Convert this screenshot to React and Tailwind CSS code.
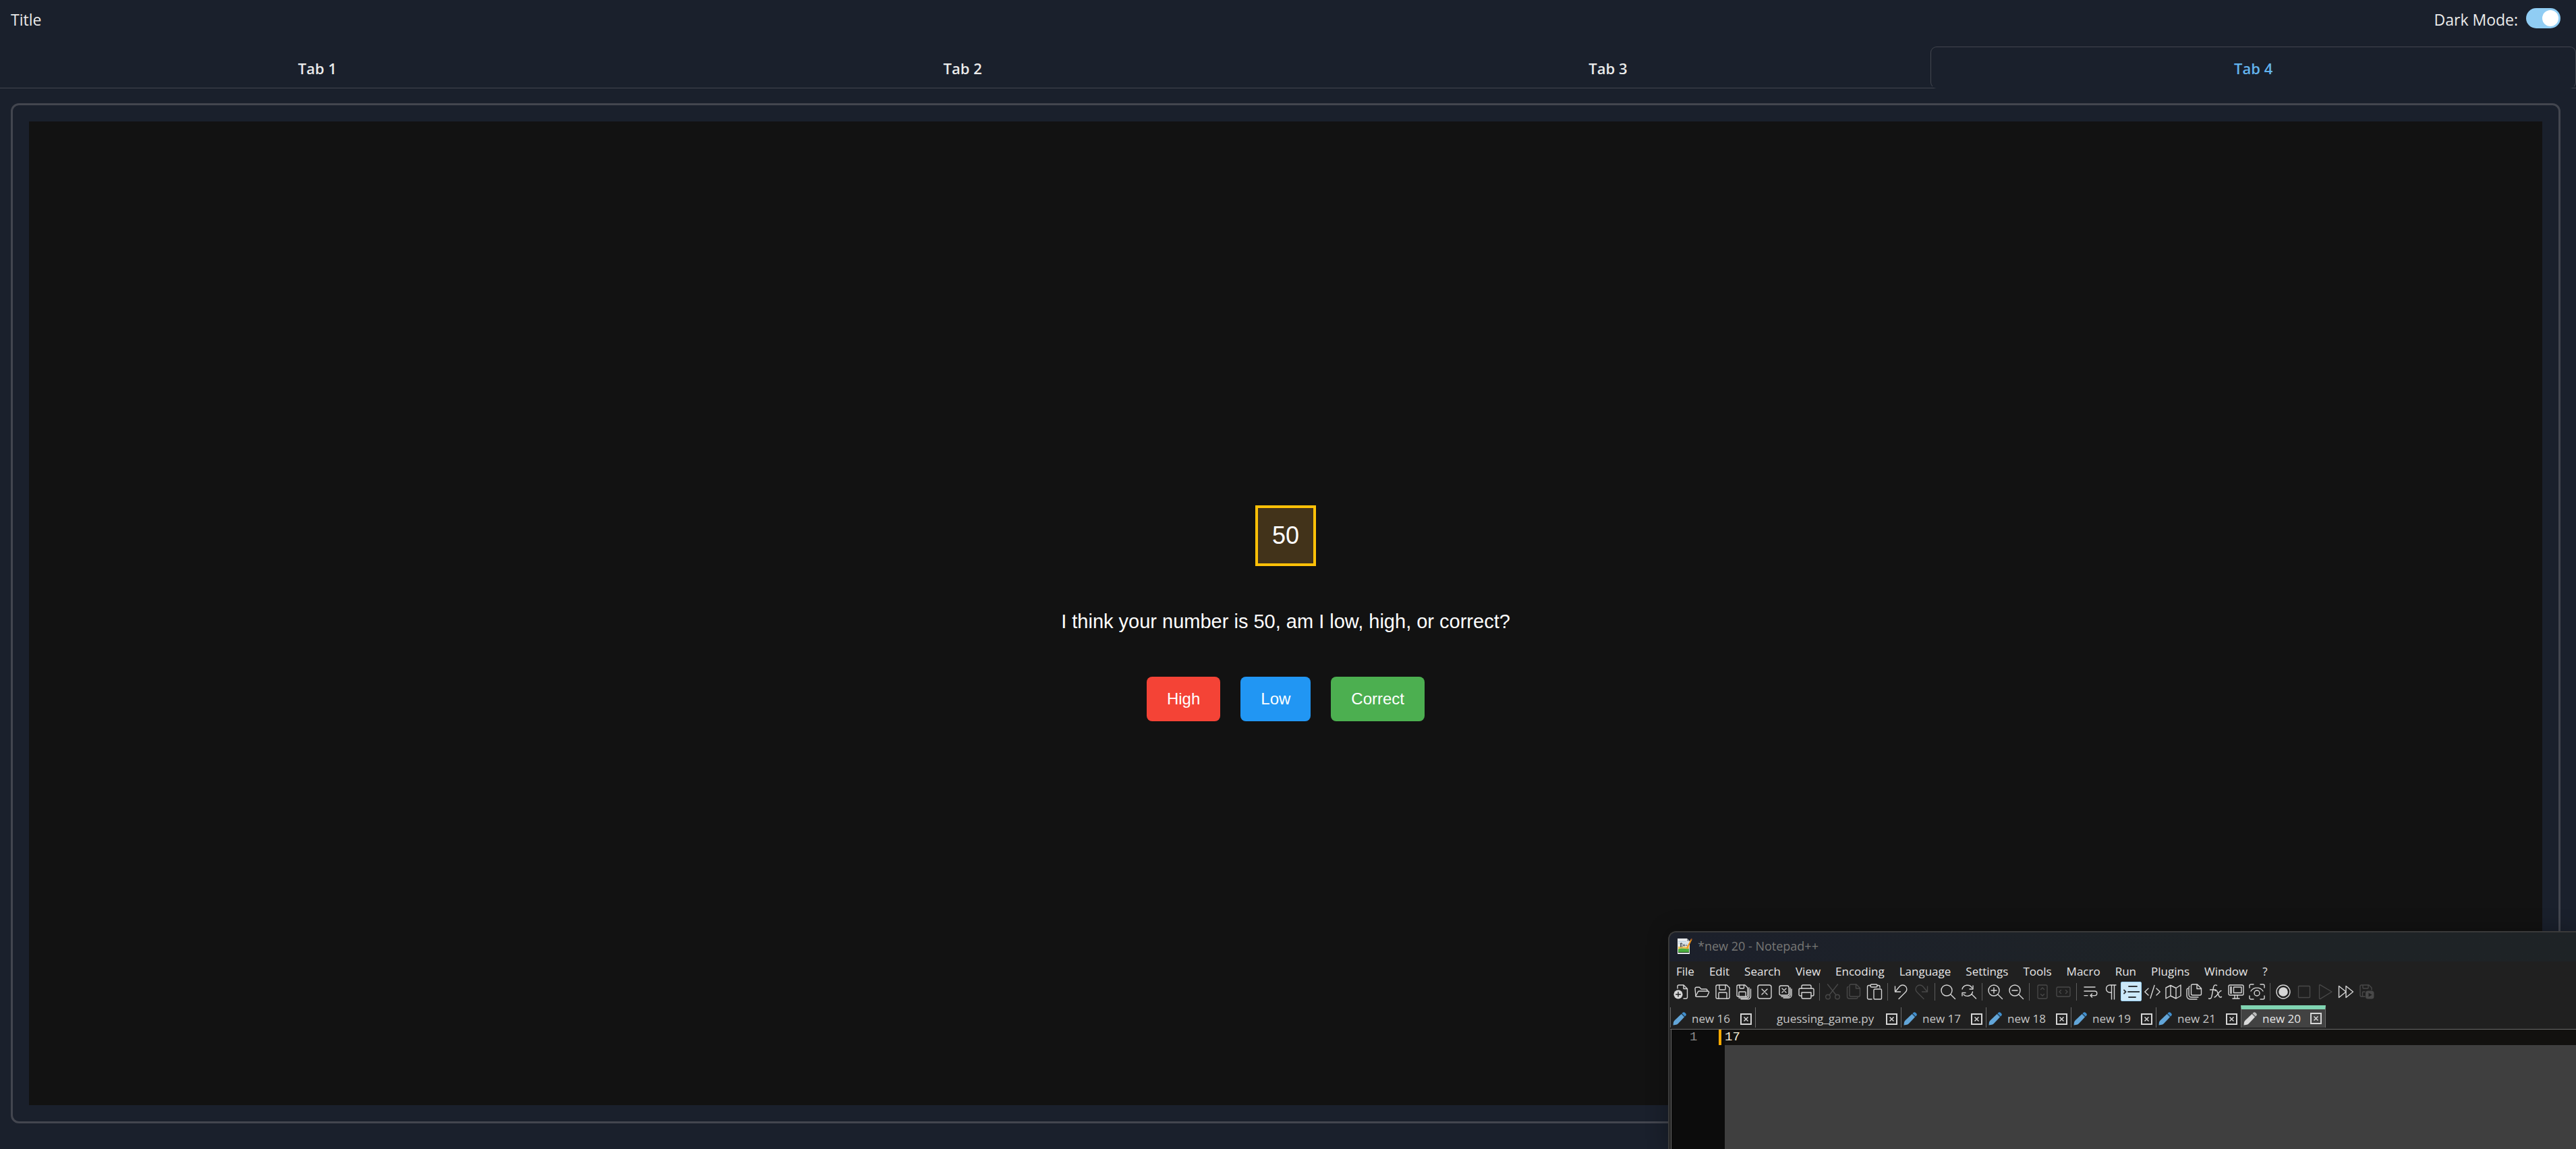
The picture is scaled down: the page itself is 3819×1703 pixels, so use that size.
import React, { useState } from "react";

const stroke = {
  fill: "none",
  stroke: "currentColor",
  strokeWidth: 1.4,
  strokeLinecap: "round",
  strokeLinejoin: "round",
};

function Icon({ children }) {
  return (
    <svg viewBox="0 0 24 24" className="size-6" aria-hidden="true" {...stroke}>
      {children}
    </svg>
  );
}

const icons = {
  New: (
    <>
      <path d="M7 7V4a2 2 0 0 1 2-2h7l5.5 5.5V20a2 2 0 0 1-2 2H16M16 2v5.5h5.5" />
      <circle cx="8" cy="15.8" r="6.6" fill="currentColor" stroke="none" />
      <path d="M8 12.5v6.6M4.7 15.8h6.6" stroke="#202020" />
    </>
  ),
  Open: (
    <>
      <path d="M3 18.5 2 7.5a2 2 0 0 1 2-2.2h4.5L11 8h7a2 2 0 0 1 2 2v1" />
      <path d="M3 18.5 6.3 12a2 2 0 0 1 1.8-1H21a1.5 1.5 0 0 1 1.5 2l-2.3 5a2 2 0 0 1-2 1.3H4.2A1.5 1.5 0 0 1 3 18.5Z" />
    </>
  ),
  Save: (
    <>
      <path d="M4 2h14l4 4v14a2 2 0 0 1-2 2H4a2 2 0 0 1-2-2V4a2 2 0 0 1 2-2Z" />
      <path d="M7 2v6a1 1 0 0 0 1 1h7a1 1 0 0 0 1-1V2M6 22v-8a1 1 0 0 1 1-1h10a1 1 0 0 1 1 1v8" />
    </>
  ),
  "Save All": (
    <>
      <path d="M4 2h10l4 4v11a2 2 0 0 1-2 2H4a2 2 0 0 1-2-2V4a2 2 0 0 1 2-2Z" />
      <path d="M6 2v4a1 1 0 0 0 1 1h4.500a1 1 0 0 0 1-1V2M5 19v-6a1 1 0 0 1 1-1h8a1 1 0 0 1 1 1v6M20 6v12a3 3 0 0 1-3 3H5M22.500 8v11a4 4 0 0 1-4 3.800H8" />
    </>
  ),
  Close: (
    <>
      <rect x="2" y="2" width="20" height="20" rx="3" />
      <path d="m8 8 8 8M16 8l-8 8" />
    </>
  ),
  "Close All": (
    <>
      <rect x="3" y="3" width="14" height="14" rx="2.500" />
      <path d="m7 7 6 6M13 7l-6 6M19 6v10a3 3 0 0 1-3 3H6M21 8v9a4 4 0 0 1-4 4H9" />
    </>
  ),
  Print: (
    <>
      <path d="M5 18H3a2 2 0 0 1-2-2V9a2 2 0 0 1 2-2h18a2 2 0 0 1 2 2v7a2 2 0 0 1-2 2h-2" />
      <path d="M5 7V4a2 2 0 0 1 2-2h10a2 2 0 0 1 2 2v3M5 13h14v7a2 2 0 0 1-2 2H7a2 2 0 0 1-2-2Z" />
    </>
  ),
  Cut: (
    <>
      <circle cx="5" cy="19.500" r="3.300" />
      <circle cx="19" cy="19.500" r="3.300" />
      <path d="M4.500 1 17 16.800M19.500 1 7 16.800" />
    </>
  ),
  Copy: (
    <>
      <path d="M8 1h8l5.500 5.500V17a2 2 0 0 1-2 2H8a2 2 0 0 1-2-2V3a2 2 0 0 1 2-2ZM15.500 1v6h6" />
      <path d="M4 4.500A2 2 0 0 0 2.500 6v13a3 3 0 0 0 3 3H16a2 2 0 0 0 2-1.500" />
    </>
  ),
  Paste: (
    <>
      <path d="M8 23H3.500a2 2 0 0 1-2-2V4.500a2 2 0 0 1 2-2H6M16 2.500h2a2 2 0 0 1 2 2V6" />
      <rect x="6" y="1" width="10" height="4" rx="1.500" />
      <rect x="11" y="8" width="11.500" height="15" rx="1.500" />
    </>
  ),
  Undo: <path d="M3.500 4v8h8M4 11.500l6.500-7.800a6 6 0 0 1 8.500 0 6 6 0 0 1 0 8.800L9 22.500" />,
  Redo: <path d="M20.500 4v8h-8M20 11.500l-6.500-7.800a6 6 0 0 0-8.500 0 6 6 0 0 0 0 8.800L15 22.500" />,
  Find: (
    <>
      <circle cx="10" cy="10" r="8" />
      <path d="m16 16 6.500 6.500" />
    </>
  ),
  Replace: (
    <>
      <path d="M2 8a8 8 0 0 1 14.500-2M18 3v5h-5M17.500 12A8 8 0 0 1 4 16M2 18v-4.500h5M16.500 16l6 6" />
    </>
  ),
  "Zoom In": (
    <>
      <circle cx="10" cy="10" r="8" />
      <path d="m16 16 6.500 6.500M10 6v8M6 10h8" />
    </>
  ),
  "Zoom Out": (
    <>
      <circle cx="10" cy="10" r="8" />
      <path d="m16 16 6.500 6.500M6 10h8" />
    </>
  ),
  "Sync Vertical Scrolling": (
    <>
      <rect x="5" y="2" width="14" height="20" rx="2" />
      <path d="m9.500 8.500 2.500-2.500 2.500 2.500M9.500 15.500 12 18l2.500-2.500" />
    </>
  ),
  "Sync Horizontal Scrolling": (
    <>
      <rect x="2" y="5" width="20" height="14" rx="2" />
      <path d="M8.500 9.500 6 12l2.500 2.500M15.500 9.500 18 12l-2.500 2.500" />
    </>
  ),
  "Word Wrap": <path d="M4 5h16M4 11h15.500a3.300 3.300 0 0 1 0 6.600H13M15.500 15 13 17.600l2.500 2.500M4 17.600h5" />,
  "Show All Characters": (
    <path d="M20 2h-9a5.500 5.500 0 0 0 0 11h2.500M13.500 2v21M17.500 2v21" />
  ),
  "Show Indent Guide": (
    <g strokeWidth="1.800">
      <path d="M8 4h12M7 12h17M8 20h10M1 9.500 3.500 12 1 14.500" />
    </g>
  ),
  "User Defined Language": <path d="M6 7 .8 12 6 17M18 7l5.200 5L18 17M15 2.500 9 21.500" />,
  "Document Map": (
    <path d="M1 6 8 2.500l8 4L23 2v16l-7 4-8-4-7 4ZM8 2.500V18M16 6.500V22" />
  ),
  "Document List": (
    <>
      <path d="M9.500 1h7l6 6v8a2 2 0 0 1-2 2h-11a2 2 0 0 1-2-2V3a2 2 0 0 1 2-2ZM16 1v6.500h6.500" />
      <path d="M5 4a2 2 0 0 0-1 2v10.500A3.500 3.500 0 0 0 7.500 20H18M2.500 7A2 2 0 0 0 1 9v9a5 5 0 0 0 5 5h10" />
    </>
  ),
  "Function List": (
    <path d="M14.500 2.500c-3-1.500-4.500 0-5 3L7 18.500c-.5 3-2 4.200-4.500 3.500M4.500 9h8.500M12 10.500c3-1.500 3 1 4.500 5s2 5.500 5 4M21 10.500c-3 0-7 9.500-10 9.500" />
  ),
  "Folder as Workspace": (
    <>
      <rect x="1" y="2" width="22" height="15" rx="2" />
      <rect x="8.500" y="5" width="11.500" height="8.500" />
      <path d="M4.500 5v9" strokeWidth="2.400" />
      <path d="M10 17v4.500M14 17v4.500M7 22h10" />
    </>
  ),
  Monitoring: (
    <>
      <path d="M1 6V3a2 2 0 0 1 2-2h4M17 1h4a2 2 0 0 1 2 2v3M23 18v3a2 2 0 0 1-2 2h-4M7 23H3a2 2 0 0 1-2-2v-3" />
      <circle cx="12" cy="14" r="4" />
      <path d="M3 11c4-6.500 14-6.500 18 0" />
    </>
  ),
  "Start Recording": (
    <>
      <circle cx="12" cy="12" r="10" />
      <circle cx="12" cy="12" r="6.800" fill="currentColor" stroke="none" />
    </>
  ),
  "Stop Recording": <rect x="3.500" y="3.500" width="17" height="17" rx="1" />,
  Playback: <path d="M3.500 2.500v19a1 1 0 0 0 1.500.8L22 12 5 1.800a1 1 0 0 0-1.500.7Z" />,
  "Run Multiple Times": <path d="M1.500 3.500v17L12 12ZM12 3.500v17L22.500 12Z" />,
  "Save Macro": (
    <>
      <path d="M9 19H4a2 2 0 0 1-2-2V4a2 2 0 0 1 2-2h11l4 4v3M6 2v4a1 1 0 0 0 1 1h6a1 1 0 0 0 1-1V2M5.500 19v-6a1 1 0 0 1 1-1H9" />
      <rect x="10" y="10.500" width="12.500" height="12" rx="3.500" fill="currentColor" stroke="none" />
      <path d="m14.500 13.500 5 3-5 3Z" fill="#202020" stroke="none" />
    </>
  ),
};

const toolGroups = [
  ["New", "Open", "Save", "Save All", "Close", "Close All", "Print"],
  ["Cut", "Copy", "Paste"],
  ["Undo", "Redo"],
  ["Find", "Replace"],
  ["Zoom In", "Zoom Out"],
  ["Sync Vertical Scrolling", "Sync Horizontal Scrolling"],
  [
    "Word Wrap",
    "Show All Characters",
    "Show Indent Guide",
    "User Defined Language",
    "Document Map",
    "Document List",
    "Function List",
    "Folder as Workspace",
    "Monitoring",
  ],
  ["Start Recording", "Stop Recording", "Playback", "Run Multiple Times", "Save Macro"],
];

const disabledTools = new Set([
  "Cut",
  "Copy",
  "Redo",
  "Sync Vertical Scrolling",
  "Sync Horizontal Scrolling",
  "Stop Recording",
  "Playback",
  "Save Macro",
]);

const menus = [
  "File",
  "Edit",
  "Search",
  "View",
  "Encoding",
  "Language",
  "Settings",
  "Tools",
  "Macro",
  "Run",
  "Plugins",
  "Window",
  "?",
];

const files = [
  { name: "new 16" },
  { name: "guessing_game.py", saved: true },
  { name: "new 17" },
  { name: "new 18" },
  { name: "new 19" },
  { name: "new 21" },
  { name: "new 20", active: true },
];

function NotepadLogo() {
  return (
    <svg viewBox="0 0 22 24" className="h-6 w-[22px]" aria-hidden="true">
      <path d="M0 1h14l4 4v19H0Z" fill="#e8eaec" />
      <path d="M14 1v4h4Z" fill="#9a9ea2" />
      <path d="M1 5.500h12M1 8h15" stroke="#b8cfe0" strokeWidth="1" />
      <path d="M1 13h16v5H1Z" fill="#edc25c" />
      <path d="M1 17c5-3 11 0 16-1v6H1Z" fill="#4caf3f" />
      <path d="M1 21.500h16" stroke="#173d16" strokeWidth="1" />
      <path d="M4.500 14V8h2v6M8 11h3M9.500 9.500v3M11.500 11h3" fill="none" stroke="#34383c" strokeWidth="1" />
      <path d="m13 17 1-4L20 1.500l1.500 1L15.500 15Z" fill="#f0941e" />
      <path d="m20 1.500 1.500 1" stroke="#8c4a2a" strokeWidth="2" />
    </svg>
  );
}

function Pencil({ active }) {
  const body = active ? "#d9d9d9" : "#62a5d8";
  const tip = active ? "#bdbdbd" : "#3f8fcf";
  return (
    <svg viewBox="0 0 20 20" className="size-5" aria-hidden="true">
      <path d="M.5 19.500 1 15Q1.500 13.500 3 12L12.500 3l4.500 4.500L8 17q-1.500 1.500-3 1.800Z" fill={body} />
      <path d="m13.500 2 1-1a2.500 2.500 0 0 1 3.500 0l1 1a2.500 2.500 0 0 1 0 3.500l-1 1Z" fill={tip} />
      <path d="m13 2.700 4.500 4.500" stroke={active ? "#8a8a8a" : "#2f6f9f"} strokeWidth="1" />
    </svg>
  );
}

function CloseTab({ name }) {
  return (
    <button type="button" aria-label={`Close ${name}`} className="text-[#d6d6d6]">
      <svg viewBox="0 0 17 17" className="size-[17px]" fill="none" stroke="currentColor" aria-hidden="true">
        <rect x="1" y="1" width="15" height="15" strokeWidth="2" />
        <path d="m5.500 5.500 6 6M11.500 5.500l-6 6" strokeWidth="1.500" />
      </svg>
    </button>
  );
}

function ToolButton({ name }) {
  let tone = "text-[#d6d6d6]";
  if (disabledTools.has(name)) tone = "text-[#484848]";
  if (name === "Show Indent Guide")
    tone = "rounded-xs border border-[#99d1f5] bg-[#cce8f8] text-[#2e3438]";
  return (
    <button
      type="button"
      aria-label={name}
      disabled={disabledTools.has(name)}
      className={`flex h-[29px] w-[31px] items-center justify-center ${tone}`}
    >
      <Icon>{icons[name]}</Icon>
    </button>
  );
}

function NotepadWindow() {
  return (
    <section
      aria-label="Notepad++"
      className="absolute right-0 bottom-0 flex h-[323px] w-[1346px] flex-col overflow-hidden rounded-tl-xl border-t-2 border-l-2 border-[#3a3a3a] bg-[#202020] font-['Open_Sans','Noto_Sans',sans-serif] text-[17px] leading-6 shadow-[0_0_32px_rgba(0,0,0,0.3)]"
    >
      <div className="flex h-[43px] shrink-0 items-center gap-2 bg-linear-to-r from-[#1c202b] to-[#1e2326] to-60% pb-1 pl-3 text-lg text-[#777775]">
        <NotepadLogo />
        <span>*new 20 - Notepad++</span>
      </div>
      <div className="flex h-[30px] shrink-0 items-center gap-[22px] pl-[10px] text-[#e6e6e6]">
        {menus.map((m) => (
          <button key={m} type="button">
            {m}
          </button>
        ))}
      </div>
      <div className="flex shrink-0 pl-px">
        {toolGroups.map((group, i) => (
          <React.Fragment key={group[0]}>
            {i > 0 && (
              <div className="flex w-2 items-center justify-center">
                <div className="h-[26px] w-px bg-[#5c5c5c]" />
              </div>
            )}
            {group.map((name) => (
              <ToolButton key={name} name={name} />
            ))}
          </React.Fragment>
        ))}
      </div>
      <div className="ml-px flex h-[42px] shrink-0 items-end border-b border-[#6a6a6a] pb-[2px]">
        {files.map((f) => (
          <div
            key={f.name}
            className={
              f.active
                ? "flex h-[33px] w-[126px] items-center justify-between border-x border-t-6 border-x-[#6a6a6a] border-t-[#80d4b2] bg-[#424242] pr-[5px] pl-[3px] text-[#e6e6e6]"
                : f.saved
                  ? "flex h-[30px] w-[216px] items-center justify-between border-l border-[#6a6a6a] pt-1 pr-[5px] pl-[31px] text-[#c6c6c6]"
                  : "flex h-[30px] w-[126px] items-center justify-between border-l border-[#6a6a6a] pt-1 pr-[5px] pl-[3px] text-[#c6c6c6]"
            }
          >
            <button type="button" className="flex items-center gap-2">
              {!f.saved && <Pencil active={f.active} />}
              <span>{f.name}</span>
            </button>
            <CloseTab name={f.name} />
          </div>
        ))}
      </div>
      <div className="ml-[2px] flex flex-1 border-l border-[#6a6a6a] bg-[#3f3f3f] font-['Liberation_Mono',monospace] text-[19px] leading-[23px]">
        <div className="flex w-[79px] items-start justify-between bg-[#0c0c0c] pr-[5px] pl-[27px] text-[#8c8c8c]">
          <span>1</span>
          <span className="h-[23px] w-1 bg-[#f5a800]" />
        </div>
        <textarea
          aria-label="Editor"
          defaultValue="17"
          rows={1}
          spellCheck={false}
          className="h-[23px] flex-1 resize-none overflow-hidden bg-[#12110f] text-[#f4eed8] outline-none"
        />
      </div>
    </section>
  );
}

const tabs = ["Tab 1", "Tab 2", "Tab 3", "Tab 4"];

export default function App() {
  const [active, setActive] = useState("Tab 4");
  return (
    <div className="relative flex min-h-screen flex-col overflow-hidden bg-[#1a202c] font-['Open_Sans','Noto_Sans',sans-serif] text-[23px] leading-9 text-[#ebebeb]">
      <header className="flex items-start justify-between pt-[9px] pr-[23px] pb-5 pl-4 leading-10">
        <h1>Title</h1>
        <label className="flex items-start gap-3">
          Dark Mode:
          <input
            type="checkbox"
            role="switch"
            defaultChecked
            className="mt-[3px] flex h-[30px] w-[51px] appearance-none items-center rounded-full bg-[#4a5568] px-[3px] before:size-6 before:rounded-full before:bg-white checked:justify-end checked:bg-[#90cdf4]"
          />
        </label>
      </header>
      <div role="tablist" className="-ml-2 flex border-b border-[#43464f] text-[22px]">
        {tabs.map((t) => (
          <button
            key={t}
            type="button"
            role="tab"
            aria-selected={t === active}
            onClick={() => setActive(t)}
            className={
              t === active
                ? "-mb-px h-[62px] flex-1 rounded-[9px] border border-[#43464f] border-b-[#1a202c] pt-[2px] font-semibold text-[#63b3ed]"
                : "-mb-px h-[62px] flex-1 border border-transparent pt-[2px] font-semibold"
            }
          >
            {t}
          </button>
        ))}
      </div>
      <main className="mt-[22px] mr-[23px] mb-[38px] ml-4 flex flex-1 flex-col rounded-xl border-3 border-[#43464f] p-6">
        <div className="flex flex-1 flex-col items-center justify-center bg-[#121212] font-['Liberation_Sans',sans-serif] text-white">
          <div className="flex size-[90px] items-center justify-center border-4 border-[#ffc107] bg-[#42331a] text-[36px]">
            50
          </div>
          <p className="my-[60px] text-[29px] leading-[44px]">
            I think your number is 50, am I low, high, or correct?
          </p>
          <div className="flex gap-[30px] text-[24px]">
            <button type="button" className="rounded-lg bg-[#f44336] px-[30px] py-[15px]">
              High
            </button>
            <button type="button" className="rounded-lg bg-[#2196f3] px-[30px] py-[15px]">
              Low
            </button>
            <button type="button" className="rounded-lg bg-[#4caf50] px-[30px] py-[15px]">
              Correct
            </button>
          </div>
        </div>
      </main>
      <NotepadWindow />
    </div>
  );
}
